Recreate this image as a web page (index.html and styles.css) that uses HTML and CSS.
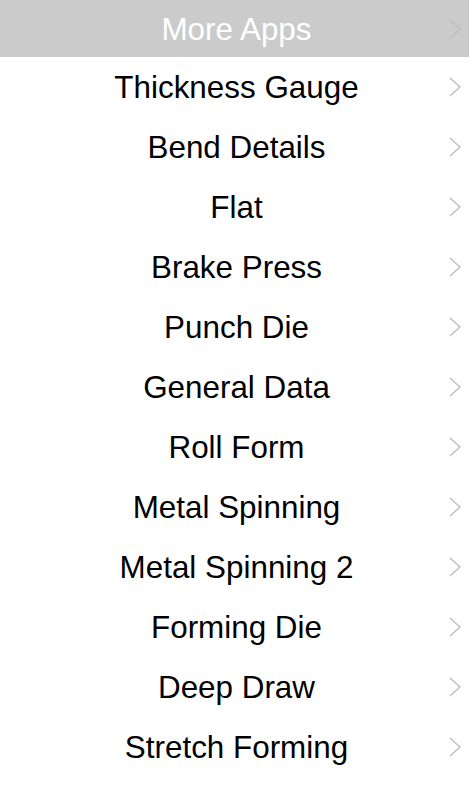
FILE: index.html
```html
<!DOCTYPE html>
<html lang="en">
<head>
    <meta charset="UTF-8">
    <meta name="viewport" content="width=device-width, initial-scale=1.0">
    <title>More Apps</title>
    <link rel="stylesheet" href="styles.css">
</head>
<body>

<!-- Header -->
<div class="row header">
    <span class="label">More Apps</span>
    <svg class="chev" viewBox="0 0 12 20"><path d="M1 1 L11 10 L1 19"/></svg>
</div>

<!-- App list -->
<div class="list">
    <div class="row"><span class="label">Thickness Gauge</span><svg class="chev" viewBox="0 0 12 20"><path d="M1 1 L11 10 L1 19"/></svg></div>
    <div class="row"><span class="label">Bend Details</span><svg class="chev" viewBox="0 0 12 20"><path d="M1 1 L11 10 L1 19"/></svg></div>
    <div class="row"><span class="label">Flat</span><svg class="chev" viewBox="0 0 12 20"><path d="M1 1 L11 10 L1 19"/></svg></div>
    <div class="row"><span class="label">Brake Press</span><svg class="chev" viewBox="0 0 12 20"><path d="M1 1 L11 10 L1 19"/></svg></div>
    <div class="row"><span class="label">Punch Die</span><svg class="chev" viewBox="0 0 12 20"><path d="M1 1 L11 10 L1 19"/></svg></div>
    <div class="row"><span class="label">General Data</span><svg class="chev" viewBox="0 0 12 20"><path d="M1 1 L11 10 L1 19"/></svg></div>
    <div class="row"><span class="label">Roll Form</span><svg class="chev" viewBox="0 0 12 20"><path d="M1 1 L11 10 L1 19"/></svg></div>
    <div class="row"><span class="label">Metal Spinning</span><svg class="chev" viewBox="0 0 12 20"><path d="M1 1 L11 10 L1 19"/></svg></div>
    <div class="row"><span class="label">Metal Spinning 2</span><svg class="chev" viewBox="0 0 12 20"><path d="M1 1 L11 10 L1 19"/></svg></div>
    <div class="row"><span class="label">Forming Die</span><svg class="chev" viewBox="0 0 12 20"><path d="M1 1 L11 10 L1 19"/></svg></div>
    <div class="row"><span class="label">Deep Draw</span><svg class="chev" viewBox="0 0 12 20"><path d="M1 1 L11 10 L1 19"/></svg></div>
    <div class="row"><span class="label">Stretch Forming</span><svg class="chev" viewBox="0 0 12 20"><path d="M1 1 L11 10 L1 19"/></svg></div>
</div>

</body>
</html>
```

FILE: styles.css
```css
body {
    margin: 0;
    background-color: #fff;
    font-family: "Liberation Sans", Arial, sans-serif;
}
.row {
    display: grid;
    grid-template-columns: 1fr auto;
    align-items: center;
    height: 60px;
    padding-left: 24px;
    padding-right: 8px;
    color: #000;
    font-size: 31.4px;
}
.row .label {
    text-align: center;
    padding-top: 2px;
}
.header {
    height: 57px;
    background-color: #cbcbcb;
    color: #fff;
}
.chev {
    width: 12px;
    height: 20px;
    fill: none;
    stroke: #bdbdbd;
    stroke-width: 1.4;
}
```
